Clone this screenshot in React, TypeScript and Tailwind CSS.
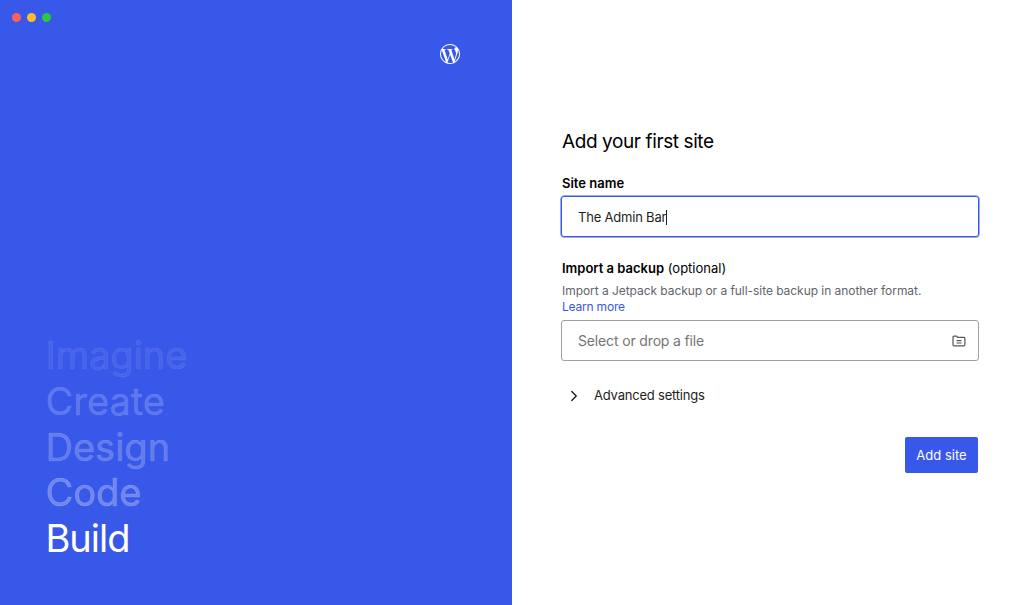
import { ChevronRight } from 'lucide-react';
import { SiWordpress } from 'react-icons/si';

const words = [
  { label: 'Imagine', cls: 'text-white/[0.07] [-webkit-text-stroke:0.6px_rgba(255,255,255,0.13)]' },
  { label: 'Create', cls: 'text-white/[0.2] [-webkit-text-stroke:0.6px_rgba(255,255,255,0.1)]' },
  { label: 'Design', cls: 'text-white/[0.24] [-webkit-text-stroke:0.6px_rgba(255,255,255,0.16)]' },
  { label: 'Code', cls: 'text-white/[0.3] [-webkit-text-stroke:0.7px_rgba(255,255,255,0.2)]' },
  { label: 'Build', cls: 'text-white tracking-[-1px]' },
];

function FolderIcon() {
  return (
    <svg width="14" height="12" viewBox="0 0 14 12" fill="none" stroke="#50575e" strokeWidth="1.2">
      <path d="M1 2.2c0-.7.4-1.1 1-1.1h2.6l1.1 1.3h6.2c.6 0 1 .4 1 1v6.4c0 .7-.4 1.1-1 1.1H2c-.6 0-1-.4-1-1.1V2.2z" />
      <path d="M4.5 5.6h5M4.5 8h5" />
    </svg>
  );
}

export default function App() {
  return (
    <div className="flex h-[605px] w-[1024px] overflow-hidden bg-white font-['Inter',sans-serif]">
      {/* Left panel */}
      <div className="flex w-[512px] flex-col bg-[#3858e9]">
        <div className="flex gap-[6px] pl-[12px] pt-[13px]">
          <span className="h-[9px] w-[9px] rounded-full bg-[#fe5f57]" />
          <span className="h-[9px] w-[9px] rounded-full bg-[#febc2e]" />
          <span className="h-[9px] w-[9px] rounded-full bg-[#28c840]" />
        </div>
        <div className="flex justify-end pr-[52px] pt-[22px]">
          <SiWordpress className="text-white" size={20} />
        </div>
        <div className="mt-auto pb-[44px] pl-[45.5px]">
          {words.map((w) => (
            <div key={w.label} className={`h-[45.8px] text-[38px] leading-[46px] ${w.cls}`}>
              {w.label}
            </div>
          ))}
        </div>
      </div>

      {/* Right panel */}
      <div className="flex w-[512px] flex-col pl-[50px] pr-[46px] pt-[129px] text-[#000]">
        <h1 className="text-[19px] leading-[26px] tracking-[-0.4px]">Add your first site</h1>

        <label className="mt-[19px] text-[13px] font-semibold leading-[18px]">Site name</label>
        <div className="-mx-px mt-[4px] flex h-[41px] items-center rounded-[3px] border border-[#3858e9] pl-[16px] pt-[2px] shadow-[0_0_0_0.5px_#3858e9]">
          <span className="text-[13px] tracking-[-0.2px] text-[#1e1e1e]">The Admin Bar</span>
          <span className="h-[15px] w-px bg-[#1e1e1e]" />
        </div>

        <div className="mt-[22px] text-[13px] leading-[18px]">
          <span className="font-semibold">Import a backup</span> (optional)
        </div>
        <p className="mt-[6px] text-[12px] leading-[16px] tracking-[-0.05px] text-[#5f656b]">
          Import a Jetpack backup or a full-site backup in another format.
          <br />
          <a className="text-[#3858e9] tracking-[-0.2px]">Learn more</a>
        </p>
        <div className="-mx-px mt-[5px] flex h-[41px] items-center justify-between rounded-[3px] border border-[#a0a0a0] pl-[16px] pr-[12px]">
          <span className="text-[14px] tracking-[-0.15px] text-[#757575]">Select or drop a file</span>
          <FolderIcon />
        </div>

        <div className="mt-[25px] flex h-[20px] items-center">
          <ChevronRight size={18} strokeWidth={1.8} className="ml-[3px] text-[#1e1e1e]" />
          <span className="ml-[11px] text-[13px] tracking-[-0.2px] text-[#1e1e1e]">Advanced settings</span>
        </div>

        <div className="mt-[31px] flex justify-end">
          <button className="h-[36px] w-[73px] rounded-[2px] bg-[#3858e9] pt-[2px] text-[13px] text-white">Add site</button>
        </div>
      </div>
    </div>
  );
}
